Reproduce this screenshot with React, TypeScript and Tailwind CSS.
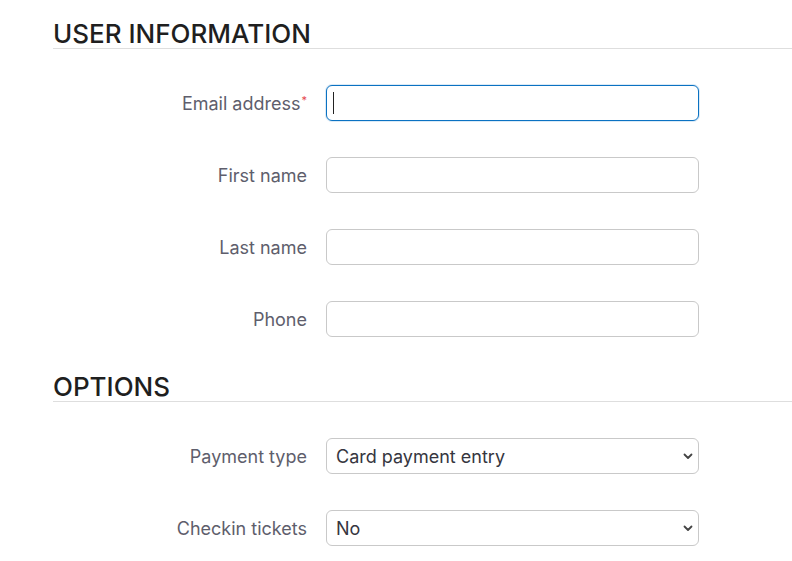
import type { ReactNode } from "react";

const FONT = { fontFamily: "Inter, 'Noto Sans', sans-serif" };

function Section({ title, children }: { title: string; children: ReactNode }) {
  return (
    <section>
      <h2 className="border-b border-[#dedede] text-[26px] leading-[28px] font-medium text-[#1f1f1f]">
        {title}
      </h2>
      <div className="mt-9 flex flex-col gap-9">{children}</div>
    </section>
  );
}

function Row({ label, required, children }: { label: string; required?: boolean; children: ReactNode }) {
  return (
    <div className="flex items-center gap-[19px]">
      <label className="w-[254px] shrink-0 text-right text-[18px] text-[#5e5e6c]">
        {label}
        {required && <sup className="ml-[1px] text-[11px] text-[#e5484d]">*</sup>}
      </label>
      {children}
    </div>
  );
}

function TextInput({ focused }: { focused?: boolean }) {
  return (
    <div
      className={`relative h-9 w-[373px] rounded-md border bg-white ${
        focused ? "border-[#0b72c2] shadow-[0_0_0_1px_rgba(11,114,194,0.15)]" : "border-[#c9c9c9]"
      }`}
    >
      {focused && <span className="absolute left-[6px] top-[6px] h-[22px] w-px bg-[#222]" />}
    </div>
  );
}

function Select({ value }: { value: string }) {
  return (
    <div className="relative flex h-9 w-[373px] items-center rounded-md border border-[#c9c9c9] bg-white pl-[9px]">
      <span className="text-[18px] text-[#363640]">{value}</span>
      <svg className="absolute right-[5px] top-[14px]" width="10" height="7" viewBox="0 0 10 7">
        <path d="M1.5 1.5 L5 5 L8.5 1.5" fill="none" stroke="#444" strokeWidth="1.8" strokeLinecap="round" strokeLinejoin="round" />
      </svg>
    </div>
  );
}

export default function App() {
  return (
    <div className="min-h-[561px] w-[792px] bg-white pl-[53px] pt-5" style={FONT}>
      <Section title="USER INFORMATION">
        <Row label="Email address" required>
          <TextInput focused />
        </Row>
        <Row label="First name">
          <TextInput />
        </Row>
        <Row label="Last name">
          <TextInput />
        </Row>
        <Row label="Phone">
          <TextInput />
        </Row>
      </Section>
      <div className="mt-9">
        <Section title="OPTIONS">
          <Row label="Payment type">
            <Select value="Card payment entry" />
          </Row>
          <Row label="Checkin tickets">
            <Select value="No" />
          </Row>
        </Section>
      </div>
    </div>
  );
}
